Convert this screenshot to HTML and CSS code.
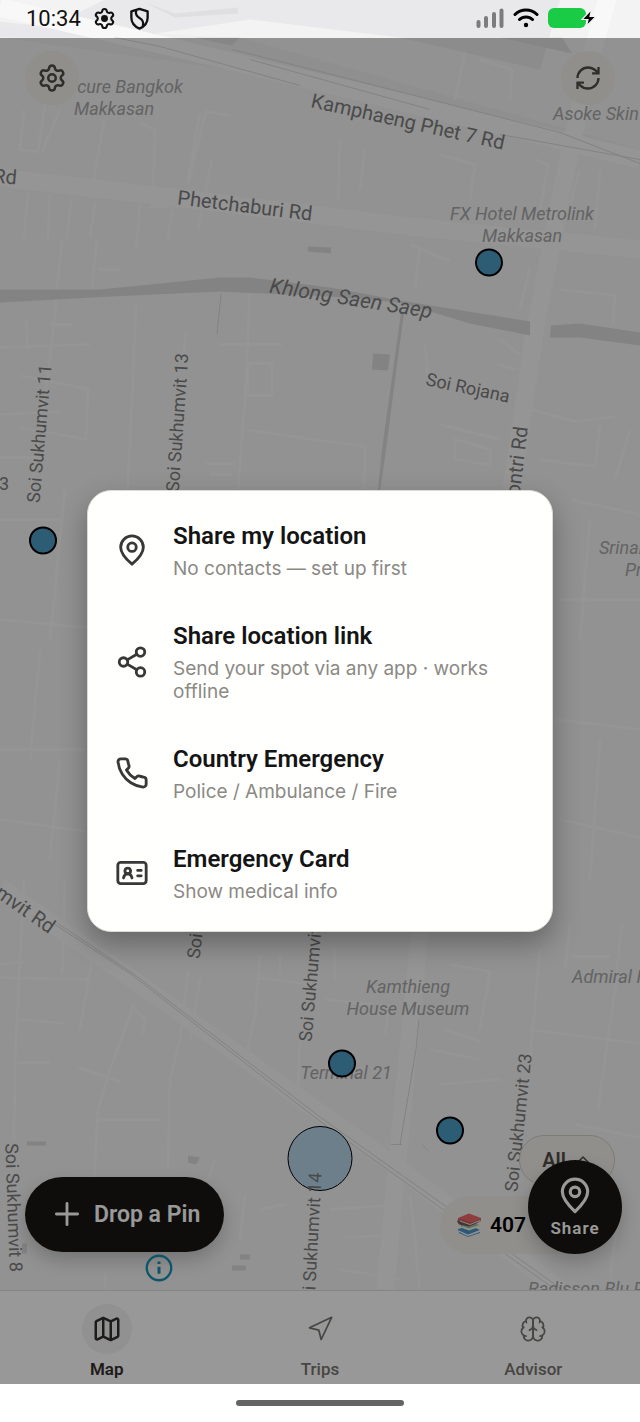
FILE: index.html
```html
<!DOCTYPE html>
<html lang="en">
<head>
    <meta charset="UTF-8">
    <meta name="viewport" content="width=device-width, initial-scale=1.0">
    <title>Map</title>
    <link rel="stylesheet" href="styles.css">
</head>
<body>
    <div class="app">
        <!-- Map canvas -->
        <svg class="map" viewBox="0 0 640 1291" preserveAspectRatio="xMidYMid slice" role="img" aria-label="Map of Sukhumvit, Bangkok">
            <!-- Railway land -->
            <g class="land">
                <path d="M105 0H560L540 70L400 38L250 20L130 38L60 22Z"/>
                <path d="M0 22L150 38H0Z"/>
                <path d="M0 28L240 38L640 150V165L300 80L0 38Z" opacity=".3"/>
            </g>
            <g class="land-dark">
                <path d="M145 3L175 14L238 8V14L175 18Z"/>
                <path d="M195 38H240L232 46Z"/>
                <path d="M500 38H562L572 54Z"/>
            </g>

            <!-- Main roads -->
            <g class="road road-wide">
                <path d="M0 8L160 45L370 95L640 160"/>
                <path d="M0 178L190 200L420 228L640 250"/>
                <path d="M610 -10L590 60L560 200L535 330L510 500L420 930L385 1290" />
                <path d="M0 888L140 985L400 1170L560 1290"/>
            </g>

            <!-- Side streets -->
            <g class="road">
                <path d="M24 110L20 150L38 152L45 105M60 110L42 152M104 120L92 190M140 124L155 130L153 195M200 114L188 180M230 116L206 112L188 185M212 160L198 230"/>
                <path d="M28 192L24 240M50 195L48 240M72 198L66 240M95 203L90 238M140 205L136 250M150 207H170M172 210L168 240"/>
                <path d="M62 240L57 290L50 360L30 500M97 240L92 288M98 270H120M136 305L132 400L127 500M186 332L183 360M250 291L245 400L238 490"/>
                <path d="M26 320L28 350M50 325H72M0 348L90 345M20 376L90 390M88 390L86 440L20 428M0 415L60 412M0 458H40"/>
                <path d="M220 345H282M246 430L320 441M260 364H272V396H248V364ZM205 464H235M210 475H232"/>
                <path d="M465 53L455 100M480 60L512 70L510 100M340 140L338 200M365 150L360 190M440 155L475 165L470 200M535 160L548 165L540 210M580 170L570 205M600 170L595 230"/>
                <path d="M410 245L450 262M420 248L415 290M530 268L520 310M560 290L615 296L613 325M500 340L520 355M425 345L428 380M500 365L515 370"/>
                <path d="M530 410L575 422L615 417M440 425L500 440M455 440L490 450V465L455 460ZM540 460L595 467L600 425M615 480L630 430M320 441L365 447L364 490"/>
                <path d="M570 500L640 515M590 520L580 640M560 600H640M555 720L640 730M600 740L590 880M560 820L640 838"/>
                <path d="M0 520H60M65 490L50 640M0 620L88 628M40 650L30 760M0 750H86M60 760L50 860M0 820L86 832"/>
                <path d="M24 880L15 1060L14 1140M0 965L24 962M0 978L90 980M92 960L80 1030M65 880L62 975M20 1020L65 1024M18 1063H50"/>
                <path d="M134 1005L110 1070L98 1110L94 1180M188 970L180 1040L170 1080L168 1170M98 1120H160M78 1068L120 1082M260 955L255 1015L248 1050M258 978L310 985M280 955V975"/>
                <path d="M200 980L190 1040M135 1010L145 1020L142 1035M300 1040L298 1090M215 1160L208 1180M245 1195L240 1240M260 1210L285 1205M105 1275V1290"/>
                <path d="M570 925L565 970M622 925L615 990L605 1060L598 1110M450 965L490 972L480 1030M530 1030L605 1040L640 1044M540 950L530 1060M573 957H610"/>
                <path d="M445 1030L480 1042M390 1005L385 1035M430 1050L480 1060M575 1125L640 1138M440 1085L500 1080M325 1000L372 1005M335 950V980"/>
                <path d="M330 1210L385 1206M345 1238L380 1236M410 1195L420 1290M395 1150L388 1230M455 1210L500 1216M620 1200L610 1280M340 1270L400 1280"/>
            </g>

            <!-- Railway lines -->
            <g class="rail">
                <path d="M115 38L160 47L300 86"/>
                <path d="M232 50L320 72L560 133L640 164"/>
                <path d="M250 60L430 110M500 135L640 160"/>
                <path d="M55 925L130 974L315 1118L450 1215L555 1290"/>
                <path d="M58 924L133 974L318 1116L453 1212L562 1290"/>
                <path d="M419 1020L416 1050L400 1145M391 1145H402M422 1145L428 1151"/>
                <path d="M221 295L217 335"/>
            </g>

            <!-- Canal -->
            <g class="water">
                <path d="M0 290H100L220 278H250L330 288L400 301L530 322V336L470 324L400 303L330 297L220 292L110 297L0 303Z"/>
                <path d="M551 326L580 324L640 333V346L580 338L550 338Z"/>
                <path d="M401 313L404 314L399 350L386 450L380 492H378L382 450L396 350Z"/>
                <path d="M373 354L390 355L388 371L372 370ZM308 247L331 248V254L308 252ZM27 1142H46V1146H27ZM188 1156L200 1158L196 1165L188 1163ZM232 1266H246V1271H232ZM240 1255H250V1260H240ZM22 1244H27V1254H22Z"/>
            </g>

            <!-- Street names -->
            <g class="label">
                <text transform="translate(408 122) rotate(12.5)">Kamphaeng Phet 7 Rd</text>
                <text transform="translate(245 206) rotate(7)">Phetchaburi Rd</text>
                <text transform="translate(5 177) rotate(5)">Rd</text>
                <text class="canal" transform="translate(351 299) rotate(9)">Khlong Saen Saep</text>
                <text class="soi" transform="translate(39 434) rotate(-85)">Soi Sukhumvit 11</text>
                <text class="soi" transform="translate(177 423) rotate(-86)">Soi Sukhumvit 13</text>
                <text class="soi" transform="translate(468 388) rotate(12)">Soi Rojana</text>
                <text class="from-end" transform="translate(521 427) rotate(-83)">Asok Montri Rd</text>
                <text class="soi" x="4" y="484">3</text>
                <text class="from-end" transform="translate(53 929) rotate(35)">Sukhumvit Rd</text>
                <text class="soi from-start" transform="translate(193 959) rotate(-83)">Soi Sukhumvit 10</text>
                <text class="soi from-start" transform="translate(305 1042) rotate(-85)">Soi Sukhumvit 12</text>
                <text class="soi" transform="translate(518 1123) rotate(-84)">Soi Sukhumvit 23</text>
                <text class="soi" transform="translate(14 1208) rotate(88)">Soi Sukhumvit 8</text>
            </g>

            <!-- Places -->
            <g class="label poi">
                <text x="130" y="87">cure Bangkok</text>
                <text x="114" y="109">Makkasan</text>
                <text class="from-start" x="553" y="114">Asoke Skin</text>
                <text x="522" y="214">FX Hotel Metrolink</text>
                <text x="522" y="236">Makkasan</text>
                <text class="from-start" x="599" y="548">Srinakh</text>
                <text class="from-start" x="625" y="570">Pra</text>
                <text x="408" y="987">Kamthieng</text>
                <text x="408" y="1009">House Museum</text>
                <text x="346" y="1073">Terminal 21</text>
                <text class="from-start" x="572" y="977">Admiral Hotel</text>
                <text class="from-start" x="528" y="1289">Radisson Blu Plaza</text>
            </g>

            <!-- Pins -->
            <circle class="cluster" cx="320" cy="1159" r="32"/>
            <g class="label">
                <text class="soi from-end" transform="translate(315 1173) rotate(-87)">Soi Sukhumvit 14</text>
            </g>
            <g class="pin">
                <circle cx="489" cy="263" r="13"/>
                <circle cx="43" cy="541" r="13"/>
                <circle cx="342" cy="1064" r="13"/>
                <circle cx="450" cy="1131" r="13"/>
            </g>
        </svg>

        <!-- System status bar -->
        <header class="status-bar">
            <div class="status-group status-left">
                <span class="clock">10:34</span>
                <svg class="status-icon" viewBox="0 0 24 24" fill="none" stroke="currentColor" stroke-width="2.2">
                    <path d="M9.671 4.136a2.34 2.34 0 0 1 4.659 0 2.34 2.34 0 0 0 3.319 1.915 2.34 2.34 0 0 1 2.33 4.033 2.34 2.34 0 0 0 0 3.831 2.34 2.34 0 0 1-2.33 4.033 2.34 2.34 0 0 0-3.319 1.915 2.34 2.34 0 0 1-4.659 0 2.34 2.34 0 0 0-3.32-1.915 2.34 2.34 0 0 1-2.33-4.033 2.34 2.34 0 0 0 0-3.831A2.34 2.34 0 0 1 6.35 6.051a2.34 2.34 0 0 0 3.319-1.915"/>
                    <circle cx="12" cy="12" r="3.600" fill="currentColor" stroke="none"/>
                </svg>
                <svg class="status-icon" viewBox="0 0 24 24" fill="none" stroke="currentColor" stroke-width="2.4" stroke-linejoin="round">
                    <path d="M12 2L20.500 4.500V11C20.500 17 17 20.500 12 22.500C7 20.500 3.500 17 3.500 11V4.500Z"/>
                    <path d="M8.500 3.500C7.500 8 9 10 12 11.500C15.500 13.500 16.500 15.500 15.500 20"/>
                </svg>
            </div>
            <div class="status-group">
                <svg class="signal" viewBox="0 0 28 20">
                    <path d="M2.500 14V18M10 10V18M18 6V18M25.500 2.500V18" stroke="#7c7c7c" stroke-width="4" stroke-linecap="round"/>
                </svg>
                <svg class="wifi" viewBox="0 0 26 20" fill="none" stroke="#000" stroke-width="3" stroke-linecap="round">
                    <path d="M2 6.500C8 .5 18 .5 24 6.500M6.500 11.500C10 8 16 8 19.500 11.500"/>
                    <circle cx="13" cy="17" r="1.200" fill="#000" stroke-width="2"/>
                </svg>
                <svg class="battery" viewBox="0 0 50 22">
                    <rect x="0" y="1" width="38" height="20" rx="6" fill="#1acb45"/>
                    <path d="M43 3L34 12.500H40L38.500 19L48 9.500H42L43.500 3Z" fill="#000" stroke="#f4f4f4" stroke-width="1.200"/>
                </svg>
            </div>
        </header>

        <!-- Floating map controls -->
        <main class="map-controls">
            <div class="controls-top">
                <button class="round-btn" aria-label="Settings">
                    <svg class="icon-30" viewBox="0 0 24 24">
                        <path d="M9.671 4.136a2.34 2.34 0 0 1 4.659 0 2.34 2.34 0 0 0 3.319 1.915 2.34 2.34 0 0 1 2.33 4.033 2.34 2.34 0 0 0 0 3.831 2.34 2.34 0 0 1-2.33 4.033 2.34 2.34 0 0 0-3.319 1.915 2.34 2.34 0 0 1-4.659 0 2.34 2.34 0 0 0-3.32-1.915 2.34 2.34 0 0 1-2.33-4.033 2.34 2.34 0 0 0 0-3.831A2.34 2.34 0 0 1 6.35 6.051a2.34 2.34 0 0 0 3.319-1.915"/>
                        <circle cx="12" cy="12" r="3"/>
                    </svg>
                </button>
                <button class="round-btn" aria-label="Refresh">
                    <svg class="icon-28 square" viewBox="0 0 24 24">
                        <path d="M3 12a9 9 0 0 1 9-9 9.750 9.750 0 0 1 6.740 2.740L21 8"/>
                        <path d="M21 2.500V8H15.500"/>
                        <path d="M21 12a9 9 0 0 1-9 9 9.750 9.750 0 0 1-6.740-2.740L3 16"/>
                        <path d="M8.500 16H3V21.500"/>
                    </svg>
                </button>
            </div>

            <div class="controls-bottom">
                <button class="drop-pin">
                    <svg class="icon-34" viewBox="0 0 24 24"><path d="M4.500 12H19.500M12 4.500V19.500"/></svg>
                    Drop a Pin
                </button>
                <button class="counter">
                    <svg class="books" viewBox="0 0 26 24" aria-hidden="true">
                        <path d="M2 16L15 13L24 17L12 23L3 19Z" fill="#4a92c6"/>
                        <path d="M3 17.500L12 21.500L24 17V19.500L12 23.500L3 19Z" fill="#e9eef0"/>
                        <path d="M3 19L12 23.300L24 19V20L12 24L3 20Z" fill="#4a92c6"/>
                        <path d="M5 11L17 9L24 12.500L13 17L5 14Z" fill="#9cc29d"/>
                        <path d="M6 13L13 15.500L23 12V14L13 17.500L6 15Z" fill="#f1f0e4"/>
                        <path d="M1 8L4 6L23 9.500L13 13.500L3 11.500Z" fill="#6e5b59"/>
                        <path d="M2 5L13 .5L25 5L14 10Z" fill="#ee6465"/>
                        <path d="M2 5L14 10L25 5V8L14 12.500L2 7.500Z" fill="#c9545a"/>
                        <path d="M3 7L14 11L24.500 6.800V8L14 12L4 8.500Z" fill="#e6dedb"/>
                    </svg>
                    407
                </button>
            </div>

            <button class="filter">
                All
                <svg class="chevron" viewBox="0 0 24 24"><path d="M5 15L12 8L19 15"/></svg>
            </button>
            <button class="share-btn">
                <svg class="share-pin" viewBox="0 0 24 24">
                    <path d="M20 10c0 4.500-4.500 9.200-8 12.500C8.500 19.200 4 14.500 4 10a8 8 0 0 1 16 0"/>
                    <circle cx="12" cy="10" r="3"/>
                </svg>
                Share
            </button>
            <button class="info-btn" aria-label="Map attribution">
                <svg class="icon-28" viewBox="0 0 24 24">
                    <circle cx="12" cy="12" r="10.500"/>
                    <path d="M12 11V17M12 6.500V8.500" stroke-width="2.600" stroke-linecap="butt"/>
                </svg>
            </button>
        </main>

        <!-- Tab bar -->
        <nav class="tab-bar">
            <a class="tab active" href="#map">
                <span class="tab-icon">
                    <svg class="icon-30" viewBox="0 0 24 24">
                        <path d="M14.106 5.553a2 2 0 0 0 1.788 0l3.659-1.830A1 1 0 0 1 21 4.619v12.764a1 1 0 0 1-.553.894l-4.553 2.277a2 2 0 0 1-1.788 0l-4.212-2.106a2 2 0 0 0-1.788 0l-3.659 1.830A1 1 0 0 1 3 19.381V6.618a1 1 0 0 1 .553-.894l4.553-2.277a2 2 0 0 1 1.788 0z"/>
                        <path d="M15 5.764v15M9 3.236v15"/>
                    </svg>
                </span>
                Map
            </a>
            <a class="tab" href="#trips">
                <span class="tab-icon">
                    <svg class="icon-28" viewBox="0 0 24 24"><path d="M3 11L22 2L13 21L11 13Z"/></svg>
                </span>
                Trips
            </a>
            <a class="tab" href="#advisor">
                <span class="tab-icon">
                    <svg class="icon-28" viewBox="0 0 24 24">
                        <path d="M12 5a3 3 0 1 0-5.997.125 4 4 0 0 0-2.526 5.770 4 4 0 0 0 .556 6.588A4 4 0 1 0 12 18Z"/>
                        <path d="M12 5a3 3 0 1 1 5.997.125 4 4 0 0 1 2.526 5.770 4 4 0 0 1-.556 6.588A4 4 0 1 1 12 18Z"/>
                        <path d="M15 13a4.500 4.500 0 0 1-3-4 4.500 4.500 0 0 1-3 4"/>
                        <path d="M17.599 6.500a3 3 0 0 0 .399-1.375M6.003 5.125A3 3 0 0 0 6.401 6.500M3.477 10.896a4 4 0 0 1 .585-.396M19.938 10.500a4 4 0 0 1 .585.396M6 18a4 4 0 0 1-1.967-.516M19.967 17.484A4 4 0 0 1 18 18"/>
                    </svg>
                </span>
                Advisor
            </a>
        </nav>

        <!-- Share menu -->
        <div class="scrim">
            <div class="sheet" role="dialog" aria-label="Share">
                <button class="option">
                    <svg class="icon-34" viewBox="0 0 24 24">
                        <path d="M20 10c0 4.500-4.500 9-8 12C8.500 19 4 14.500 4 10a8 8 0 0 1 16 0"/>
                        <circle cx="12" cy="10" r="3"/>
                    </svg>
                    <span class="option-text">
                        <span class="option-title">Share my location</span>
                        <span class="option-note">No contacts — set up first</span>
                    </span>
                </button>
                <button class="option">
                    <svg class="icon-34" viewBox="0 0 24 24">
                        <circle cx="18" cy="5" r="3"/>
                        <circle cx="6" cy="12" r="3"/>
                        <circle cx="18" cy="19" r="3"/>
                        <path d="M8.590 13.510L15.420 17.490M15.410 6.510L8.590 10.490"/>
                    </svg>
                    <span class="option-text">
                        <span class="option-title">Share location link</span>
                        <span class="option-note">Send your spot via any app · works offline</span>
                    </span>
                </button>
                <button class="option">
                    <svg class="icon-34" viewBox="0 0 24 24">
                        <path d="M22 16.920v3a2 2 0 0 1-2.180 2 19.790 19.790 0 0 1-8.630-3.070 19.500 19.500 0 0 1-6-6 19.790 19.790 0 0 1-3.070-8.670A2 2 0 0 1 4.110 2h3a2 2 0 0 1 2 1.720 12.840 12.840 0 0 0 .7 2.810 2 2 0 0 1-.45 2.110L8.090 9.910a16 16 0 0 0 6 6l1.270-1.270a2 2 0 0 1 2.110-.45 12.840 12.840 0 0 0 2.810.7A2 2 0 0 1 22 16.920z"/>
                    </svg>
                    <span class="option-text">
                        <span class="option-title">Country Emergency</span>
                        <span class="option-note">Police / Ambulance / Fire</span>
                    </span>
                </button>
                <button class="option">
                    <svg class="icon-34" viewBox="0 0 24 24">
                        <rect x="2" y="4.500" width="20" height="15" rx="2"/>
                        <circle cx="9" cy="10.500" r="2"/>
                        <path d="M6 15.500C6.500 13.500 7.500 12.500 9 12.500S11.500 13.500 12 15.500M16 10.200H18.500M16 14H18.500"/>
                    </svg>
                    <span class="option-text">
                        <span class="option-title">Emergency Card</span>
                        <span class="option-note">Show medical info</span>
                    </span>
                </button>
            </div>
        </div>

        <div class="home-bar"><div class="home-handle"></div></div>
    </div>
</body>
</html>
```

FILE: styles.css
```css
:root {
    --ink: #191714;
    --cream: #f0eee9;
    --muted: #8b8984;
    --icon: #383838;
}

* {
    margin: 0;
    padding: 0;
    box-sizing: border-box;
}

body {
    font-family: Roboto, "Liberation Sans", sans-serif;
    background: #fff;
    color: var(--ink);
}

button {
    font: inherit;
    color: inherit;
    background: none;
    border: none;
    cursor: pointer;
}

svg {
    display: block;
    flex-shrink: 0;
}

button svg,
.tab svg {
    fill: none;
    stroke: currentColor;
    stroke-width: 2;
    stroke-linecap: round;
    stroke-linejoin: round;
}

.icon-28 {
    width: 28px;
    height: 28px;
}

.icon-30 {
    width: 30px;
    height: 30px;
}

.icon-34 {
    width: 34px;
    height: 34px;
}

button .square {
    stroke-linecap: butt;
    stroke-linejoin: miter;
}

/* The map runs under the status bar, the scrim covers map and tabs */
.app {
    display: grid;
    grid-template-columns: minmax(0, 1fr);
    grid-template-rows: 38px minmax(0, 1fr) auto auto;
    height: 100vh;
}

.app > * {
    grid-column: 1;
}

/* Map */
.map {
    grid-row: 1 / 3;
    width: 100%;
    height: 100%;
    background: #f3f3f3;
}

.land {
    fill: #e9e9ec;
}

.land-dark {
    fill: #dfdfe2;
}

.road {
    fill: none;
    stroke: #f8f8f8;
    stroke-width: 3;
}

.road-wide {
    stroke-width: 18;
    stroke: #f8f8f8;
}

.rail {
    fill: none;
    stroke: #dadada;
    stroke-width: 1;
}

.water {
    fill: #dadada;
}

.label {
    font-size: 20px;
    fill: #7c7c7c;
    text-anchor: middle;
    dominant-baseline: central;
}

.soi {
    font-size: 18px;
}

.canal {
    font-style: italic;
    font-size: 21px;
}

.poi {
    font-size: 18px;
    font-style: italic;
    fill: #a6a6a6;
}

.from-start {
    text-anchor: start;
}

.from-end {
    text-anchor: end;
}

.pin circle {
    fill: #4c9cc4;
    stroke: #000;
    stroke-width: 2;
}

.cluster {
    fill: #b4d4e8;
    stroke: #000;
    stroke-width: 1;
}

/* Status bar */
.status-bar {
    grid-row: 1;
    display: flex;
    align-items: center;
    justify-content: space-between;
    padding: 0 42px 2px 26px;
    color: #111;
}

.status-group {
    display: flex;
    align-items: center;
    gap: 9px;
}

.status-left {
    gap: 12px;
}

.clock {
    font-size: 22px;
}

.status-icon {
    width: 23px;
    height: 23px;
}

.signal {
    width: 28px;
    height: 20px;
}

.wifi {
    width: 26px;
    height: 20px;
}

.battery {
    width: 50px;
    height: 22px;
}

/* Floating controls */
.map-controls {
    grid-row: 2;
    position: relative;
    display: flex;
    flex-direction: column;
    justify-content: space-between;
    padding: 13px 25px 36px;
}

.controls-top,
.controls-bottom {
    display: flex;
    align-items: center;
    justify-content: space-between;
}

.round-btn {
    display: flex;
    align-items: center;
    justify-content: center;
    width: 54px;
    height: 54px;
    border-radius: 50%;
    background: var(--cream);
    color: #504d48;
}

.drop-pin {
    display: flex;
    align-items: center;
    gap: 10px;
    height: 75px;
    padding: 0 24px 0 25px;
    border-radius: 38px;
    background: var(--ink);
    color: #fff;
    font-size: 23px;
    font-weight: 600;
    box-shadow: 0 8px 18px rgba(0, 0, 0, 0.2);
}

.counter {
    display: flex;
    align-items: center;
    gap: 8px;
    height: 58px;
    margin: 22px 31px 0 0;
    padding: 0 58px 0 16px;
    border-radius: 29px;
    background: var(--cream);
    color: #000;
    font-size: 21px;
    font-weight: 600;
}

.books {
    width: 26px;
    height: 24px;
}

.counter .books {
    stroke: none;
}

.filter {
    position: absolute;
    right: 25px;
    bottom: 105px;
    display: flex;
    align-items: center;
    gap: 8px;
    height: 50px;
    padding: 0 22px;
    border: 1px solid #d0cdc4;
    border-radius: 25px;
    background: var(--cream);
    color: #504d48;
    font-size: 20px;
    font-weight: 600;
}

.chevron {
    width: 18px;
    height: 18px;
}

.share-btn {
    position: absolute;
    right: 18px;
    bottom: 36px;
    display: flex;
    flex-direction: column;
    align-items: center;
    justify-content: center;
    gap: 4px;
    width: 94px;
    height: 94px;
    border-radius: 50%;
    background: var(--ink);
    color: #fff;
    font-size: 17px;
    font-weight: 600;
    letter-spacing: 1px;
    box-shadow: 0 8px 18px rgba(0, 0, 0, 0.2);
}

.share-pin {
    width: 38px;
    height: 38px;
}

.info-btn {
    position: absolute;
    left: 145px;
    bottom: 8px;
    color: #1790b0;
}

/* Tab bar */
.tab-bar {
    grid-row: 3;
    display: grid;
    grid-template-columns: repeat(3, 1fr);
    padding: 13px 0 4px;
    border-top: 1px solid #dedede;
    background: #fdfdfd;
}

.tab {
    display: flex;
    flex-direction: column;
    align-items: center;
    gap: 4px;
    color: #77756f;
    font-size: 17px;
    font-weight: 500;
    line-height: 22px;
    text-decoration: none;
}

.tab svg {
    stroke-width: 1.5;
}

.tab-icon {
    display: flex;
    align-items: center;
    justify-content: center;
    width: 50px;
    height: 50px;
    border-radius: 50%;
}

.tab.active {
    color: #33302c;
    font-weight: 600;
}

.tab.active svg {
    stroke-width: 2;
}

.tab.active .tab-icon {
    background: #f2f2f2;
}

/* Share menu */
.scrim {
    grid-row: 2 / 4;
    position: relative;
    display: flex;
    align-items: center;
    justify-content: center;
    padding: 0 87px;
    background: rgba(0, 0, 0, 0.4);
}

.sheet {
    width: 100%;
    max-width: 480px;
    padding: 9px 0 8px;
    border: 1px solid #dcdad4;
    border-radius: 24px;
    background: #fffffe;
    box-shadow: 0 12px 28px rgba(0, 0, 0, 0.3);
}

.option {
    display: flex;
    align-items: center;
    gap: 24px;
    width: 100%;
    padding: 20px 27px;
    color: var(--icon);
    text-align: left;
}

.option-text {
    display: flex;
    flex-direction: column;
    gap: 5px;
}

.option-title {
    color: #141414;
    font-size: 24px;
    font-weight: 600;
    line-height: 32px;
}

.option-note {
    color: var(--muted);
    font-family: Inter, "Liberation Sans", sans-serif;
    font-size: 19px;
    line-height: 23px;
}

/* Home bar */
.home-bar {
    grid-row: 4;
    display: flex;
    justify-content: center;
    padding: 16px 0;
    background: #fff;
}

.home-handle {
    width: 168px;
    height: 6px;
    border-radius: 3px;
    background: #646464;
}
```
